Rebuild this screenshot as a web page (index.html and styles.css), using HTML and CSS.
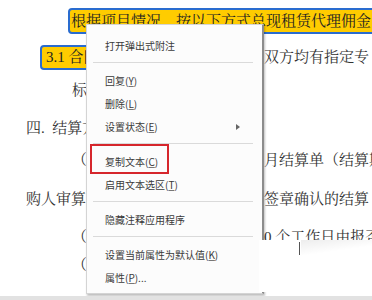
FILE: index.html
```html
<!DOCTYPE html>
<html lang="zh-CN">
<head>
  <meta charset="UTF-8">
  <meta name="viewport" content="width=device-width, initial-scale=1.0">
  <title>附注菜单</title>
  <link rel="stylesheet" href="styles.css">
</head>
<body>
  <div class="page">
    <div class="doc">
      <p class="line first"><span class="hl long">根据项目情况，按以下方式总现租赁代理佣金</span></p>
      <p class="line boxed"><span class="cell"><span class="hl short">3.1 合同签订后，甲乙</span></span><span class="cell">双方均有指定专</span></p>
      <p class="line sp-a"><span class="cell in2">标的物</span></p>
      <p class="line sp-b"><span class="cell in1 pre">四.  结算方式</span></p>
      <p class="line sp-a"><span class="cell in2">（一）每月</span><span class="cell">月结算单（结算期</span></p>
      <p class="line sp-c"><span class="cell in1">购人审算</span><span class="cell">签章确认的结算</span></p>
      <p class="line sp-b"><span class="cell in2">（二）</span><span class="cell">0 个工作日由报否</span></p>
      <p class="line sp-d"><span class="cell in2">（三）</span></p>
    </div>

    <ul class="menu">
      <li class="item">打开弹出式附注</li>
      <li class="sep"></li>
      <li class="item">回复(<u>Y</u>)</li>
      <li class="item">删除(<u>L</u>)</li>
      <li class="item">设置状态(<u>E</u>)<span class="arrow"></span></li>
      <li class="sep"></li>
      <li class="item">复制文本(<u>C</u>)<span class="mark"></span></li>
      <li class="item">启用文本选区(<u>T</u>)</li>
      <li class="sep"></li>
      <li class="item">隐藏注释应用程序</li>
      <li class="sep"></li>
      <li class="item">设置当前属性为默认值(<u>K</u>)</li>
      <li class="item">属性(<u>P</u>)...</li>
    </ul>

    <div class="smudge"></div>
  </div>
  <div class="bottom-bar"></div>
</body>
</html>
```

FILE: styles.css
```css
html, body {
  margin: 0;
  padding: 0;
}
body {
  width: 372px;
  height: 300px;
  overflow: hidden;
  background: #fff;
  font-family: "Liberation Serif", "Noto Serif CJK SC", "Noto Sans CJK SC", serif;
  color: #333;
}
.page {
  position: relative;
  height: 296px;
  overflow: hidden;
}
.bottom-bar {
  height: 4px;
  background: #e2e2e2;
}

/* document lines */
.line {
  display: grid;
  grid-template-columns: 264px 1fr;
  margin: 0;
  height: 24px;
  line-height: 24px;
  font-size: 15px;
  white-space: nowrap;
}
.cell {
  overflow: hidden;
}
.in1 {
  padding-left: 26px;
}
.in2 {
  padding-left: 72px;
}
.pre {
  white-space: pre;
}
.first {
  display: block;
  margin-top: 8px;
  height: 26px;
}
.boxed {
  margin-top: 11px;
  height: 25px;
  line-height: 25px;
}
.sp-a {
  margin-top: 8px;
}
.sp-b {
  margin-top: 14px;
}
.sp-c {
  margin-top: 15px;
}
.sp-d {
  margin-top: 4px;
}
.hl {
  background: #ffcc00;
  border: 2px solid #2a6ccf;
  border-radius: 4px;
  color: #222;
}
.hl.long {
  display: block;
  margin-left: 68px;
  margin-right: -6px;
  padding-left: 1px;
  line-height: 22px;
}
.hl.short {
  display: inline-block;
  margin-left: 40px;
  padding: 0 4px;
  line-height: 21px;
}

/* context menu */
.menu {
  position: absolute;
  left: 86px;
  top: 24px;
  width: 175px;
  margin: 0;
  padding: 9px 0 4px;
  list-style: none;
  background: #fcfcfc;
  border: 1px solid #d4d4d4;
  border-right: 2px solid #8c8c8c;
  box-shadow: 1px 2px 2px rgba(0, 0, 0, 0.25);
  font-family: "Noto Sans CJK SC", "Noto Sans", sans-serif;
  font-size: 10px;
  color: #3a3a3a;
}
.item {
  position: relative;
  height: 23px;
  line-height: 23px;
  padding-left: 18px;
}
.item u {
  text-decoration-color: #777;
}
.sep {
  height: 1px;
  margin: 5px 9px 6px 6px;
  background: #dadada;
}
.arrow {
  position: absolute;
  right: 22px;
  top: 9px;
  border-left: 4px solid #666;
  border-top: 3px solid transparent;
  border-bottom: 3px solid transparent;
}
.mark {
  position: absolute;
  left: 3px;
  top: -6px;
  width: 79px;
  height: 30px;
  box-sizing: border-box;
  border: 2px solid #d6262c;
}

/* blank patch lying over the lower right corner */
.smudge {
  position: absolute;
  left: 259px;
  top: 240px;
  right: 0;
  height: 52px;
  background: #fff;
}
.smudge::before {
  content: "";
  position: absolute;
  left: 40px;
  top: 2px;
  width: 1px;
  height: 13px;
  background: #555;
}
.smudge::after {
  content: "";
  position: absolute;
  left: 42px;
  top: 0;
  right: 0;
  height: 24px;
  background: linear-gradient(172deg, rgba(0, 0, 0, 0.07) 0, rgba(0, 0, 0, 0) 16px);
}
```
